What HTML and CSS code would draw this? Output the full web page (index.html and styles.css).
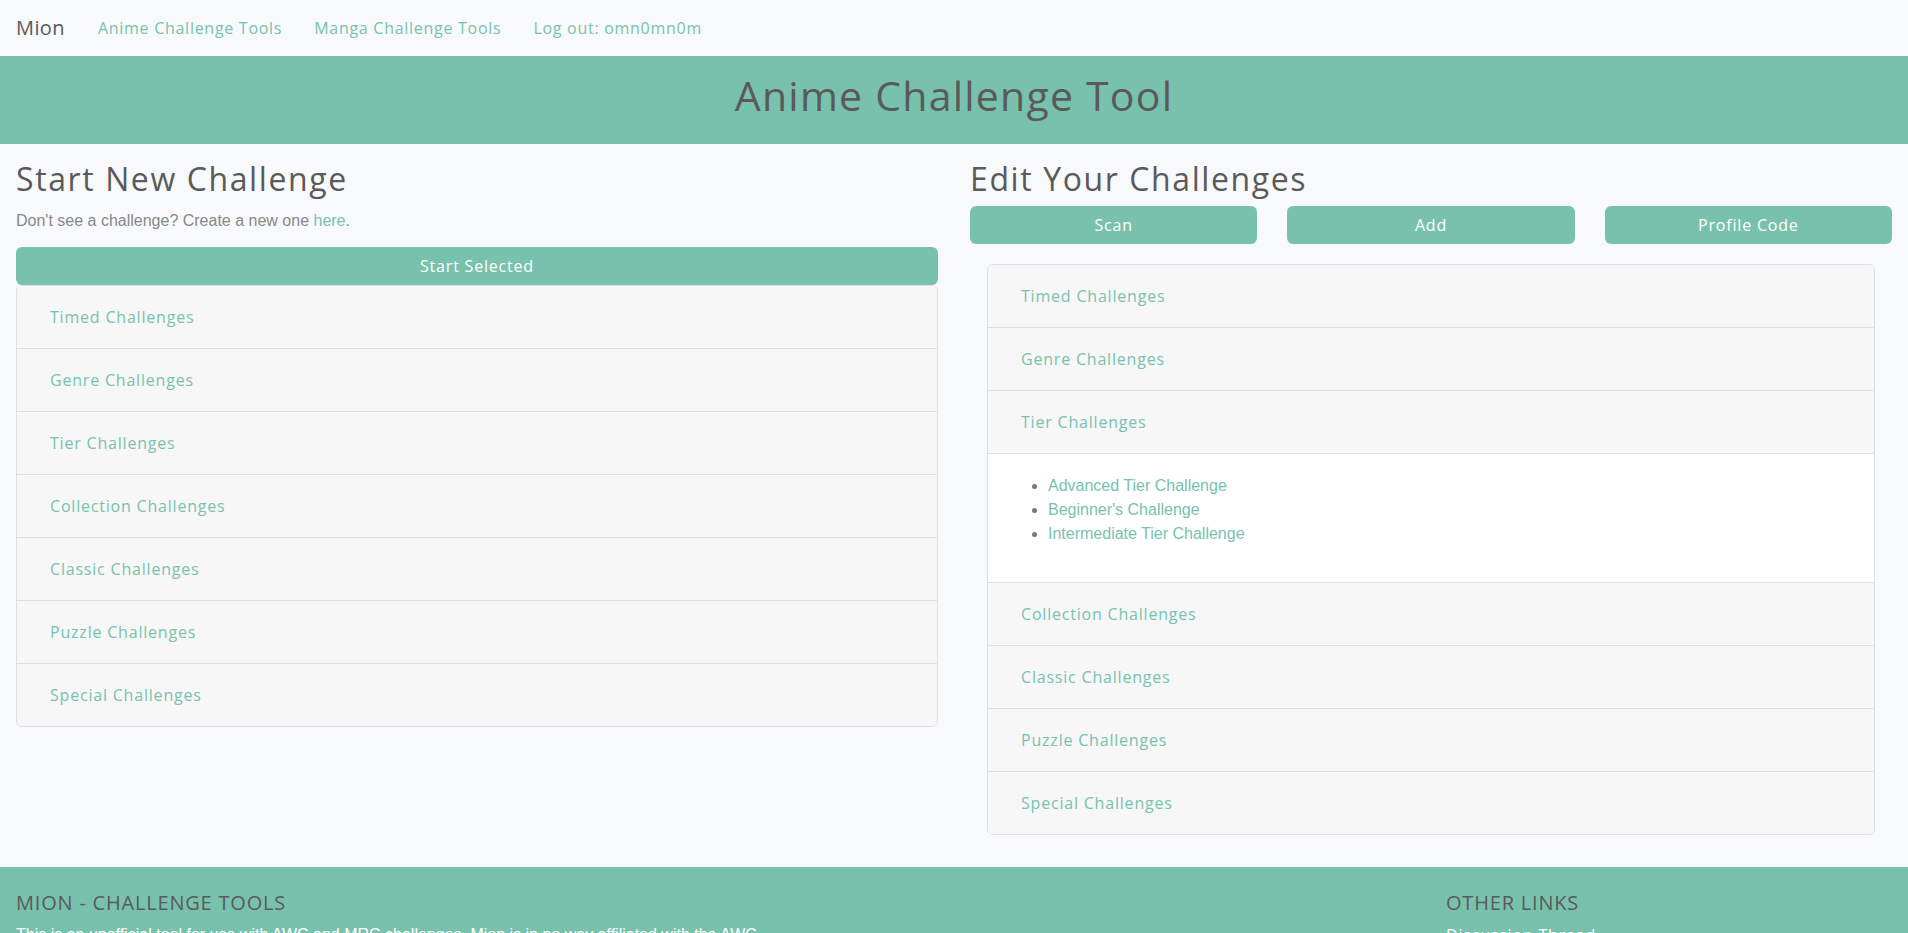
FILE: index.html
```html
<!DOCTYPE html>
<html lang="en">
<head>
<meta charset="utf-8">
<title>Anime Challenge Tool</title>
<link rel="stylesheet" href="styles.css">
</head>
<body>
<nav class="navbar">
  <a class="brand" href="#">Mion</a>
  <a class="nav-link" href="#">Anime Challenge Tools</a>
  <a class="nav-link" href="#">Manga Challenge Tools</a>
  <a class="nav-link" href="#">Log out: omn0mn0m</a>
</nav>
<header class="banner">
  <h1>Anime Challenge Tool</h1>
</header>
<main class="content">
  <section class="col">
    <h2>Start New Challenge</h2>
    <p class="lead">Don't see a challenge? Create a new one <a href="#">here</a>.</p>
    <button class="btn btn-block">Start Selected</button>
    <div class="accordion">
      <div class="acc-head"><a href="#">Timed Challenges</a></div>
      <div class="acc-head"><a href="#">Genre Challenges</a></div>
      <div class="acc-head"><a href="#">Tier Challenges</a></div>
      <div class="acc-head"><a href="#">Collection Challenges</a></div>
      <div class="acc-head"><a href="#">Classic Challenges</a></div>
      <div class="acc-head"><a href="#">Puzzle Challenges</a></div>
      <div class="acc-head"><a href="#">Special Challenges</a></div>
    </div>
  </section>
  <section class="col">
    <h2>Edit Your Challenges</h2>
    <div class="btn-row">
      <button class="btn">Scan</button>
      <button class="btn">Add</button>
      <button class="btn">Profile Code</button>
    </div>
    <div class="accordion inset">
      <div class="acc-head"><a href="#">Timed Challenges</a></div>
      <div class="acc-head"><a href="#">Genre Challenges</a></div>
      <div class="acc-head"><a href="#">Tier Challenges</a></div>
      <div class="acc-body">
        <ul>
          <li><a href="#">Advanced Tier Challenge</a></li>
          <li><a href="#">Beginner's Challenge</a></li>
          <li><a href="#">Intermediate Tier Challenge</a></li>
        </ul>
      </div>
      <div class="acc-head"><a href="#">Collection Challenges</a></div>
      <div class="acc-head"><a href="#">Classic Challenges</a></div>
      <div class="acc-head"><a href="#">Puzzle Challenges</a></div>
      <div class="acc-head"><a href="#">Special Challenges</a></div>
    </div>
  </section>
</main>
<footer class="footer">
  <div class="foot-main">
    <h5>Mion - Challenge Tools</h5>
    <p>This is an unofficial tool for use with AWC and MRC challenges. Mion is in no way affiliated with the AWC or MRC.</p>
  </div>
  <div class="foot-links">
    <h5>Other Links</h5>
    <a href="#">Discussion Thread</a>
  </div>
</footer>
</body>
</html>
```
FILE: styles.css
```css
* { box-sizing: border-box; }
html, body { margin: 0; padding: 0; }
body {
  background: #f8f9fa;
  font-family: "Open Sans", "Liberation Sans", sans-serif;
  color: #888;
  font-size: 16px;
  line-height: 1.5;
}
a { color: #78c2ad; text-decoration: none; }

.navbar {
  height: 56px;
  display: flex;
  align-items: center;
  padding: 0 16px;
  background: #f8f9fa;
}
.brand {
  font-size: 20px;
  color: #5a5a5a;
  margin-right: 17px;
  font-weight: 400;
  letter-spacing: 0.02em;
}
.nav-link {
  padding: 0 16px;
  font-size: 16px;
  font-weight: 400;
  color: #78c2ad;
  letter-spacing: 0.045em;
}

.banner {
  background: #78c2ad;
  height: 88px;
  padding-bottom: 8px;
  display: flex;
  align-items: center;
  justify-content: center;
}
.banner h1 {
  margin: 0;
  font-size: 41px;
  font-weight: 400;
  color: #5a5a5a;
  line-height: 1.2;
  letter-spacing: 0.03em;
}

.content {
  display: grid;
  grid-template-columns: 1fr 1fr;
  column-gap: 32px;
  padding: 16px 16px 0;
}
h2 {
  margin: 0 0 8px;
  font-size: 32px;
  font-weight: 400;
  color: #5a5a5a;
  line-height: 1.2;
  letter-spacing: 0.05em;
}
.lead {
  margin: 0 0 14px;
  padding-top: 3px;
  font-family: "Liberation Sans", Arial, sans-serif;
  color: #888;
}
.btn {
  display: block;
  border: none;
  background: #78c2ad;
  color: #fff;
  font-family: "Open Sans", "Liberation Sans", sans-serif;
  font-size: 16px;
  letter-spacing: 0.05em;
  height: 38px;
  border-radius: 6px;
  cursor: pointer;
}
.btn-block { width: 100%; }
.btn-row {
  display: grid;
  grid-template-columns: repeat(3, 1fr);
  column-gap: 30px;
}

.accordion {
  border: 1px solid #dfdfdf;
  border-radius: 6px;
  overflow: hidden;
}
.inset { margin: 20px 17px 32px; }
.acc-head {
  background: #f7f7f7;
  padding: 19px 33px;
  line-height: 24px;
  height: 63px;
  border-bottom: 1px solid #dfdfdf;
  letter-spacing: 0.05em;
}
.accordion > :last-child { border-bottom: none; height: 62px; }
.acc-body {
  background: #fff;
  padding: 20px;
  border-bottom: 1px solid #dfdfdf;
  height: 129px;
}
.acc-body ul {
  margin: 0;
  padding-left: 40px;
  font-family: "Liberation Sans", Arial, sans-serif;
  color: #777;
  line-height: 24px;
}

.footer {
  background: #78c2ad;
  display: grid;
  grid-template-columns: 1fr 446px;
  column-gap: 32px;
  padding: 24px 16px 24px;
}
.footer h5 {
  margin: 0 0 8px;
  font-size: 20px;
  font-weight: 400;
  text-transform: uppercase;
  color: #5a5a5a;
  line-height: 24px;
  letter-spacing: 0.04em;
}
.foot-main p {
  margin: 0;
  max-width: 750px;
  font-family: "Liberation Sans", Arial, sans-serif;
  color: #fff;
}
.foot-links a { color: #fff; letter-spacing: 0.05em; }
```
